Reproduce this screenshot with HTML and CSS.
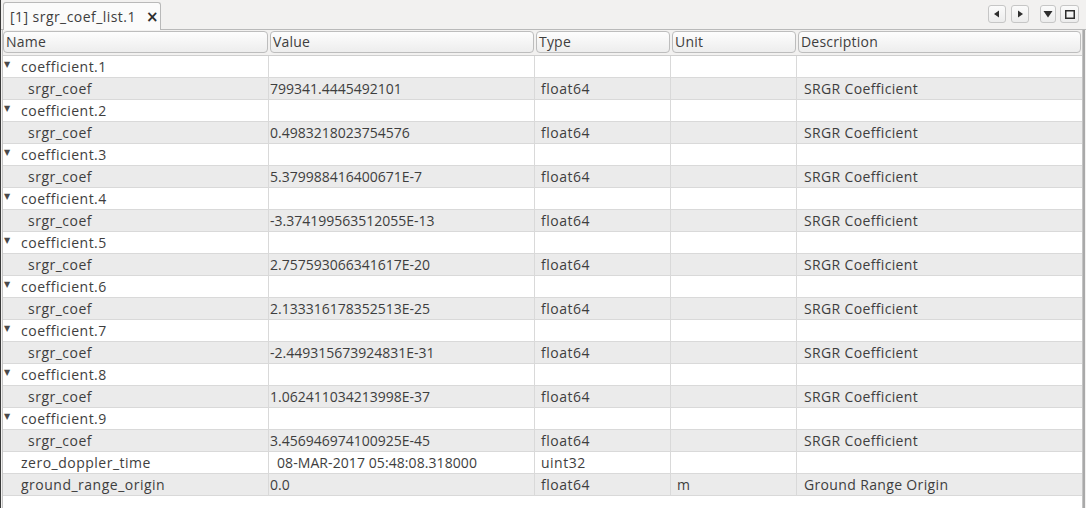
FILE: index.html
```html
<!DOCTYPE html>
<html>
<head>
<meta charset="utf-8">
<link rel="stylesheet" href="styles.css">
</head>
<body>
<div class="window">
  <div class="tabbar">
    <div class="tab"><span class="tab-title">[1] srgr_coef_list.1</span><span class="tab-close">×</span></div>
    <div class="tab-buttons">
      <span class="tbtn b1"><svg width="8" height="8" viewBox="0 0 8 8"><path d="M6 0.5 L6 7.5 L1 4 Z" fill="#2e2e2e"/></svg></span>
      <span class="tbtn b2"><svg width="8" height="8" viewBox="0 0 8 8"><path d="M2 0.5 L2 7.5 L7 4 Z" fill="#2e2e2e"/></svg></span>
      <span class="tbtn b3"><svg width="10" height="8" viewBox="0 0 10 8"><path d="M0.5 1 L9.5 1 L5 7.5 Z" fill="#2e2e2e"/></svg></span>
      <span class="tbtn b4"><svg width="10" height="9" viewBox="0 0 10 9"><rect x="0.75" y="0.75" width="8.5" height="7.5" fill="none" stroke="#2e2e2e" stroke-width="1.5"/></svg></span>
    </div>
  </div>
  <div class="panel">
    <div class="header">
      <div class="hcell">Name</div>
      <div class="hcell">Value</div>
      <div class="hcell">Type</div>
      <div class="hcell">Unit</div>
      <div class="hcell">Description</div>
    </div>
    <div class="rows">
      <div class="row"><div class="c name group"><span class="exp">▼</span>coefficient.1</div><div class="c val"></div><div class="c typ"></div><div class="c unit"></div><div class="c desc"></div></div>
      <div class="row alt"><div class="c name child">srgr_coef</div><div class="c val">799341.4445492101</div><div class="c typ">float64</div><div class="c unit"></div><div class="c desc">SRGR Coefficient</div></div>
      <div class="row"><div class="c name group"><span class="exp">▼</span>coefficient.2</div><div class="c val"></div><div class="c typ"></div><div class="c unit"></div><div class="c desc"></div></div>
      <div class="row alt"><div class="c name child">srgr_coef</div><div class="c val">0.4983218023754576</div><div class="c typ">float64</div><div class="c unit"></div><div class="c desc">SRGR Coefficient</div></div>
      <div class="row"><div class="c name group"><span class="exp">▼</span>coefficient.3</div><div class="c val"></div><div class="c typ"></div><div class="c unit"></div><div class="c desc"></div></div>
      <div class="row alt"><div class="c name child">srgr_coef</div><div class="c val">5.379988416400671E-7</div><div class="c typ">float64</div><div class="c unit"></div><div class="c desc">SRGR Coefficient</div></div>
      <div class="row"><div class="c name group"><span class="exp">▼</span>coefficient.4</div><div class="c val"></div><div class="c typ"></div><div class="c unit"></div><div class="c desc"></div></div>
      <div class="row alt"><div class="c name child">srgr_coef</div><div class="c val">-3.374199563512055E-13</div><div class="c typ">float64</div><div class="c unit"></div><div class="c desc">SRGR Coefficient</div></div>
      <div class="row"><div class="c name group"><span class="exp">▼</span>coefficient.5</div><div class="c val"></div><div class="c typ"></div><div class="c unit"></div><div class="c desc"></div></div>
      <div class="row alt"><div class="c name child">srgr_coef</div><div class="c val">2.757593066341617E-20</div><div class="c typ">float64</div><div class="c unit"></div><div class="c desc">SRGR Coefficient</div></div>
      <div class="row"><div class="c name group"><span class="exp">▼</span>coefficient.6</div><div class="c val"></div><div class="c typ"></div><div class="c unit"></div><div class="c desc"></div></div>
      <div class="row alt"><div class="c name child">srgr_coef</div><div class="c val">2.133316178352513E-25</div><div class="c typ">float64</div><div class="c unit"></div><div class="c desc">SRGR Coefficient</div></div>
      <div class="row"><div class="c name group"><span class="exp">▼</span>coefficient.7</div><div class="c val"></div><div class="c typ"></div><div class="c unit"></div><div class="c desc"></div></div>
      <div class="row alt"><div class="c name child">srgr_coef</div><div class="c val">-2.449315673924831E-31</div><div class="c typ">float64</div><div class="c unit"></div><div class="c desc">SRGR Coefficient</div></div>
      <div class="row"><div class="c name group"><span class="exp">▼</span>coefficient.8</div><div class="c val"></div><div class="c typ"></div><div class="c unit"></div><div class="c desc"></div></div>
      <div class="row alt"><div class="c name child">srgr_coef</div><div class="c val">1.062411034213998E-37</div><div class="c typ">float64</div><div class="c unit"></div><div class="c desc">SRGR Coefficient</div></div>
      <div class="row"><div class="c name group"><span class="exp">▼</span>coefficient.9</div><div class="c val"></div><div class="c typ"></div><div class="c unit"></div><div class="c desc"></div></div>
      <div class="row alt"><div class="c name child">srgr_coef</div><div class="c val">3.456946974100925E-45</div><div class="c typ">float64</div><div class="c unit"></div><div class="c desc">SRGR Coefficient</div></div>
      <div class="row"><div class="c name leaf">zero_doppler_time</div><div class="c val indent">08-MAR-2017 05:48:08.318000</div><div class="c typ">uint32</div><div class="c unit"></div><div class="c desc"></div></div>
      <div class="row alt"><div class="c name leaf">ground_range_origin</div><div class="c val">0.0</div><div class="c typ">float64</div><div class="c unit">m</div><div class="c desc">Ground Range Origin</div></div>
    </div>
  </div>
</div>
</body>
</html>
```

FILE: styles.css
```css
html, body {
  margin: 0;
  padding: 0;
}
body {
  width: 1086px;
  height: 508px;
  overflow: hidden;
  background: #f2f1f0;
  font-family: "Open Sans", "DejaVu Sans", sans-serif;
  font-size: 14px;
  color: #3e3e3e;
}
.window {
  height: 508px;
  border-left: 1px solid #3a3a3a;
  box-sizing: border-box;
  display: flex;
  flex-direction: column;
}
.tabbar {
  height: 30px;
  box-sizing: border-box;
  border-bottom: 1px solid #b9b9b9;
  display: flex;
  align-items: flex-end;
  padding-left: 2px;
}
.tab {
  width: 158px;
  height: 28px;
  flex-shrink: 0;
  box-sizing: border-box;
  border: 1px solid #b9b9b9;
  border-bottom: none;
  border-radius: 3px 3px 0 0;
  background: #fbfbfb;
  display: flex;
  align-items: center;
  padding-left: 6px;
  margin-bottom: -1px;
  white-space: nowrap;
}
.tab-title {
  font-size: 14px;
  letter-spacing: 0.45px;
  white-space: nowrap;
  flex-shrink: 0;
}
.tab-close {
  margin-left: 10px;
  font-size: 15px;
  font-weight: bold;
  color: #2e2e2e;
  font-family: "DejaVu Sans", sans-serif;
  flex-shrink: 0;
}
.tab-buttons {
  margin-left: auto;
  align-self: flex-start;
  margin-top: 5px;
  margin-right: 7px;
  display: flex;
}
.tbtn {
  width: 18px;
  height: 18px;
  box-sizing: border-box;
  border: 1px solid #c6c6c6;
  border-radius: 3px;
  background: linear-gradient(#fbfbfb, #ececec);
  display: flex;
  align-items: center;
  justify-content: center;
}
.tbtn.b2 {
  margin-left: 5px;
}
.tbtn.b3 {
  margin-left: 11px;
  width: 16px;
}
.tbtn.b4 {
  margin-left: 4px;
  width: 19px;
}
.panel {
  flex: 1;
  margin-left: 1px;
  margin-right: 3px;
  border-left: 1px solid #c4c4c4;
  border-right: 1px solid #c4c4c4;
  background: #ffffff;
  box-shadow: 2px 0 0 #a9a9a9;
}
.header {
  height: 26px;
  box-sizing: border-box;
  background: #f2f1f0;
  display: grid;
  grid-template-columns: 266px 266px 136px 126px 1fr;
  padding: 1px 0 2px 0;
  border-bottom: 1px solid #cfcfcf;
}
.hcell {
  margin: 0 1px;
  border: 1px solid #bdbdbd;
  border-radius: 4px;
  background: linear-gradient(#fdfdfd, #ededed);
  padding-left: 2px;
  line-height: 20px;
  letter-spacing: 0.2px;
}
.hcell:first-child {
  margin-left: 0;
}
.row {
  display: grid;
  grid-template-columns: 266px 266px 136px 126px 1fr;
  height: 22px;
  box-sizing: border-box;
  border-bottom: 1px solid #d9d9d9;
  background: #ffffff;
}
.row.alt {
  background: #ebebeb;
}
.c {
  border-right: 1px solid #d9d9d9;
  line-height: 21px;
  white-space: nowrap;
  overflow: hidden;
}
.c.name {
  letter-spacing: 0.5px;
}
.c.desc {
  border-right: none;
  padding-left: 7px;
  letter-spacing: 0.35px;
}
.c.val {
  padding-left: 1px;
}
.c.val.indent {
  padding-left: 8px;
  letter-spacing: 0.08px;
}
.c.typ {
  padding-left: 6px;
  letter-spacing: 0.5px;
}
.c.unit {
  padding-left: 6px;
}
.name.group {
  position: relative;
  padding-left: 18px;
}
.name.child {
  padding-left: 25px;
}
.name.leaf {
  padding-left: 18px;
}
.exp {
  position: absolute;
  left: 1px;
  top: -2px;
  font-size: 8px;
  color: #4a4a4a;
  letter-spacing: 0;
  font-family: "DejaVu Sans", sans-serif;
}
```
